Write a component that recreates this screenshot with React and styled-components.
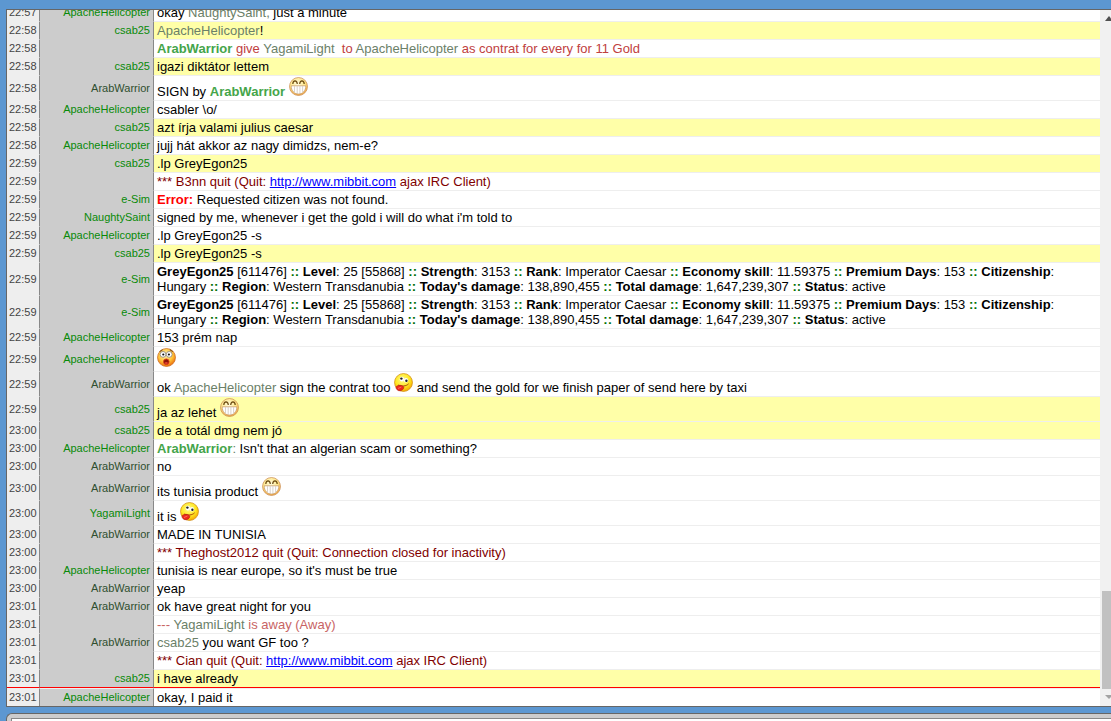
import React from "react";
import styled, { createGlobalStyle } from "styled-components";

const GlobalStyle = createGlobalStyle`
  * { box-sizing: border-box; }
  html, body { margin: 0; background: #5c97d1; }
  body { font-family: "Liberation Sans", Arial, sans-serif; overflow: hidden; }
`;

const Page = styled.div`
  height: 100vh;
  display: flex;
  flex-direction: column;
  padding: 9px 0 0 6px;
  background: #5c97d1;
`;

const LogPanel = styled.main`
  flex: 1;
  min-height: 0;
  display: flex;
  border: 1px solid #666;
  border-right: 0;
  background: #fff;
`;

const Viewport = styled.div`
  flex: 1;
  min-width: 0;
  display: flex;
  flex-direction: column;
  justify-content: flex-end;
  overflow: hidden;
`;

const Log = styled.table`
  width: 100%;
  flex: none;
  border-collapse: separate;
  border-spacing: 0;
  table-layout: fixed;
`;

const TimeCol = styled.col`
  width: 33px;
`;

const NickCol = styled.col`
  width: 114px;
`;

const Row = styled.tr`
  & > td {
    border-bottom: ${(p) => (p.$marker ? "1px solid #f00" : p.$last ? "0" : "")};
    border-top: ${(p) => (p.$last ? "1px solid #eee" : "")};
  }
`;

const Cell = styled.td`
  padding: 1px 3px;
  vertical-align: middle;
  white-space: nowrap;
`;

const Time = styled(Cell)`
  padding: 1px 2px;
  background: #eee;
  border-right: 1px solid #888;
  border-bottom: 1px solid #eee;
  color: #444;
  font-size: 11px;
  line-height: 15px;
`;

const Nick = styled(Cell)`
  background: #ccc;
  border-right: 1px solid #888;
  border-bottom: 1px solid #ccc;
  color: ${(p) => (p.$dark ? "#2f4f2f" : "#088a08")};
  font-size: 11px;
  line-height: 15px;
  text-align: right;
`;

const toneColors = {
  plain: "#000",
  quit: "#7f0000",
  action: "#c04040",
  away: "#c86464",
};

const Message = styled(Cell)`
  background: ${(p) => (p.$own ? "#ffffa8" : "#fff")};
  border-bottom: 1px solid #eee;
  color: ${(p) => toneColors[p.$tone || "plain"]};
  font-size: 13px;
  line-height: 15px;
  white-space: pre-wrap;
`;

const Mention = styled.span`
  color: #6b8068;
`;

const Friend = styled.b`
  color: #45a54a;
`;

const ErrorLabel = styled.b`
  color: #f00;
`;

const Separator = styled.b`
  color: #006e00;
`;

const Link = styled.a`
  color: #00f;
  text-decoration: underline;
`;

const Smiley = styled.svg`
  width: 19px;
  height: 19px;
  vertical-align: baseline;
`;

const ScrollTrack = styled.div`
  width: 11px;
  flex: none;
  display: flex;
  flex-direction: column;
  justify-content: flex-end;
  padding-left: 2px;
  background: #f1f1f1;
`;

const ScrollThumb = styled.div`
  height: 98px;
  background: #c1c1c1;
`;

const ScrollArrow = styled.svg`
  display: block;
  width: 9px;
  height: 17px;
  flex: none;
`;

const Spacer = styled.div`
  flex: 1;
`;

const Composer = styled.form`
  flex: none;
  height: 8px;
  margin-top: 6px;
  padding: 4px 0 0 4px;
  overflow: hidden;
  border: 1px solid #666;
  border-width: 1px 0 0 1px;
  border-radius: 6px 0 0 0;
  background: #ccc;
`;

const ComposerInput = styled.input`
  display: block;
  width: 100%;
  height: 20px;
  border: 1px solid #888;
  border-right: 0;
  background: #fff;
  outline: 0;
`;

const shades = {
  pale: ["#fffbe0", "#ffe88a", "#f2a640", "#c98a50"],
  bright: ["#fffb90", "#ffe820", "#f5a400", "#d08a10"],
  deep: ["#fff2b0", "#ffc43a", "#ec6a08", "#c9651c"],
};

function Ball({ id, shade }) {
  const [light, mid, edge, rim] = shades[shade];
  return (
    <>
      <defs>
        <radialGradient id={id} cx="45%" cy="35%" r="66%">
          <stop offset="0" stopColor={light} />
          <stop offset="0.6" stopColor={mid} />
          <stop offset="1" stopColor={edge} />
        </radialGradient>
      </defs>
      <circle cx="9.5" cy="9.5" r="9" fill={`url(#${id})`} stroke={rim} strokeWidth="0.7" />
    </>
  );
}

function Grin() {
  const id = React.useId();
  return (
    <Smiley viewBox="0 0 19 19" role="img" aria-label="grin">
      <Ball id={id} shade="pale" />
      <path d="M3.8 7C4 2.9 8 2.9 8.3 7M10.7 7C11 2.9 15 2.9 15.2 7" fill="none" stroke="#6b4a10" strokeWidth="1.2" />
      <path d="M2.2 8.8H16.8C16.8 13.8 13.8 17 9.5 17S2.2 13.8 2.2 8.8Z" fill="#fff" stroke="#c09060" strokeWidth="0.7" />
      <path d="M5.5 9.2V15M8.2 9.2V16.7M10.9 9.2V16.7M13.6 9.2V15" stroke="#c8beb4" strokeWidth="0.7" />
    </Smiley>
  );
}

function Tongue() {
  const id = React.useId();
  return (
    <Smiley viewBox="0 0 19 19" role="img" aria-label="crazy">
      <Ball id={id} shade="bright" />
      <ellipse cx="7.9" cy="6.2" rx="2.1" ry="2.4" fill="#fff" />
      <ellipse cx="12" cy="7.2" rx="2.1" ry="2.3" fill="#fff" />
      <circle cx="7.4" cy="5.6" r="1.2" fill="#222" />
      <circle cx="12.4" cy="7.7" r="1.2" fill="#222" />
      <path d="M4.3 12C8 13.6 12 13.4 14.6 10.8" fill="none" stroke="#a83c0c" strokeWidth="1" />
      <path d="M2.2 13.6C3.8 11.8 8.8 12 9.8 14.2C9.8 16.6 6.6 18.4 4.2 17.5C2.6 16.8 1.6 15 2.2 13.6Z" fill="#ee2a1c" stroke="#b01810" strokeWidth="0.6" />
      <path d="M4 15.5L7.4 14" stroke="#ff8a74" strokeWidth="0.7" />
    </Smiley>
  );
}

function Shock() {
  const id = React.useId();
  return (
    <Smiley viewBox="0 0 19 19" role="img" aria-label="shocked">
      <Ball id={id} shade="deep" />
      <path d="M2.6 3.6L5.6 1.6M12.8 1.6L15.8 3.6" stroke="#7a4a18" strokeWidth="1.1" />
      <circle cx="6" cy="6.4" r="2.9" fill="#fff" stroke="#77706a" strokeWidth="0.7" />
      <circle cx="12.2" cy="6.4" r="2.9" fill="#fff" stroke="#77706a" strokeWidth="0.7" />
      <circle cx="6.3" cy="6.5" r="1.1" fill="#111" />
      <circle cx="11.9" cy="6.5" r="1.1" fill="#111" />
      <ellipse cx="9.3" cy="13.7" rx="2.8" ry="2.8" fill="#8a1408" stroke="#e0401c" strokeWidth="0.9" />
      <ellipse cx="9.3" cy="15" rx="1.6" ry="0.9" fill="#e0402c" />
    </Smiley>
  );
}

const stats = [
  ["Level", "25 [55868] "],
  ["Strength", "3153 "],
  ["Rank", "Imperator Caesar "],
  ["Economy skill", "11.59375 "],
  ["Premium Days", "153 "],
  ["Citizenship", "Hungary "],
  ["Region", "Western Transdanubia "],
  ["Today's damage", "138,890,455 "],
  ["Total damage", "1,647,239,307 "],
  ["Status", "active"],
];

function CitizenInfo() {
  return (
    <>
      <b>GreyEgon25</b> [611476]{" "}
      {stats.map(([label, value]) => (
        <React.Fragment key={label}>
          <Separator>::</Separator> <b>{label}</b>
          {": "}
          {value}
        </React.Fragment>
      ))}
    </>
  );
}

const mibbit = <Link href="http://www.mibbit.com">http://www.mibbit.com</Link>;

const messages = [
  { time: "22:57", nick: "ApacheHelicopter", body: <>okay <Mention>NaughtySaint,</Mention> just a minute</> },
  { time: "22:58", nick: "csab25", body: <><Mention>ApacheHelicopter</Mention>!</> },
  {
    time: "22:58",
    tone: "action",
    body: (
      <>
        <Friend>ArabWarrior</Friend> give <Mention>YagamiLight</Mention>{"  "}to <Mention>ApacheHelicopter</Mention> as contrat for every for 11 Gold
      </>
    ),
  },
  { time: "22:58", nick: "csab25", body: "igazi diktátor lettem" },
  { time: "22:58", nick: "ArabWarrior", body: <>SIGN by <Friend>ArabWarrior</Friend> <Grin /></> },
  { time: "22:58", nick: "ApacheHelicopter", body: "csabler \\o/" },
  { time: "22:58", nick: "csab25", body: "azt írja valami julius caesar" },
  { time: "22:58", nick: "ApacheHelicopter", body: "jujj hát akkor az nagy dimidzs, nem-e?" },
  { time: "22:59", nick: "csab25", body: ".lp GreyEgon25" },
  { time: "22:59", tone: "quit", body: <>*** B3nn quit (Quit: {mibbit} ajax IRC Client)</> },
  { time: "22:59", nick: "e-Sim", body: <><ErrorLabel>Error:</ErrorLabel> Requested citizen was not found.</> },
  { time: "22:59", nick: "NaughtySaint", body: "signed by me, whenever i get the gold i will do what i'm told to" },
  { time: "22:59", nick: "ApacheHelicopter", body: ".lp GreyEgon25 -s" },
  { time: "22:59", nick: "csab25", body: ".lp GreyEgon25 -s" },
  { time: "22:59", nick: "e-Sim", body: <CitizenInfo /> },
  { time: "22:59", nick: "e-Sim", body: <CitizenInfo /> },
  { time: "22:59", nick: "ApacheHelicopter", body: "153 prém nap" },
  { time: "22:59", nick: "ApacheHelicopter", body: <Shock /> },
  {
    time: "22:59",
    nick: "ArabWarrior",
    body: <>ok <Mention>ApacheHelicopter</Mention> sign the contrat too <Tongue /> and send the gold for we finish paper of send here by taxi</>,
  },
  { time: "22:59", nick: "csab25", body: <>ja az lehet <Grin /></> },
  { time: "23:00", nick: "csab25", body: "de a totál dmg nem jó" },
  { time: "23:00", nick: "ApacheHelicopter", body: <><Friend>ArabWarrior</Friend><Mention>:</Mention> Isn't that an algerian scam or something?</> },
  { time: "23:00", nick: "ArabWarrior", body: "no" },
  { time: "23:00", nick: "ArabWarrior", body: <>its tunisia product <Grin /></> },
  { time: "23:00", nick: "YagamiLight", body: <>it is <Tongue /></> },
  { time: "23:00", nick: "ArabWarrior", body: "MADE IN TUNISIA" },
  { time: "23:00", tone: "quit", body: "*** Theghost2012 quit (Quit: Connection closed for inactivity)" },
  { time: "23:00", nick: "ApacheHelicopter", body: "tunisia is near europe, so it's must be true" },
  { time: "23:00", nick: "ArabWarrior", body: "yeap" },
  { time: "23:01", nick: "ArabWarrior", body: "ok have great night for you" },
  { time: "23:01", tone: "away", body: <>--- <Mention>YagamiLight</Mention> is away (Away)</> },
  { time: "23:01", nick: "ArabWarrior", body: <><Mention>csab25</Mention> you want GF too ?</> },
  { time: "23:01", tone: "quit", body: <>*** Cian quit (Quit: {mibbit} ajax IRC Client)</> },
  { time: "23:01", nick: "csab25", body: "i have already", marker: true },
  { time: "23:01", nick: "ApacheHelicopter", body: "okay, I paid it" },
];

export default function App() {
  return (
    <Page>
      <GlobalStyle />
      <LogPanel>
        <Viewport>
          <Log aria-label="Chat log">
            <colgroup>
              <TimeCol />
              <NickCol />
              <col />
            </colgroup>
            <tbody>
              {messages.map((m, i) => (
                <Row key={i} $marker={m.marker} $last={i === messages.length - 1}>
                  <Time>{m.time}</Time>
                  <Nick $dark={m.nick === "ArabWarrior"}>{m.nick}</Nick>
                  <Message $tone={m.tone} $own={m.nick === "csab25"}>{m.body}</Message>
                </Row>
              ))}
            </tbody>
          </Log>
        </Viewport>
        <ScrollTrack aria-hidden="true">
          <ScrollArrow viewBox="0 0 9 17">
            <path d="M3 11L7 6L11 11Z" fill="#505050" />
          </ScrollArrow>
          <Spacer />
          <ScrollThumb />
          <ScrollArrow viewBox="0 0 9 17">
            <path d="M3 6H11L7 10Z" fill="#a3a3a3" />
          </ScrollArrow>
        </ScrollTrack>
      </LogPanel>
      <Composer>
        <ComposerInput type="text" aria-label="Message" />
      </Composer>
    </Page>
  );
}
